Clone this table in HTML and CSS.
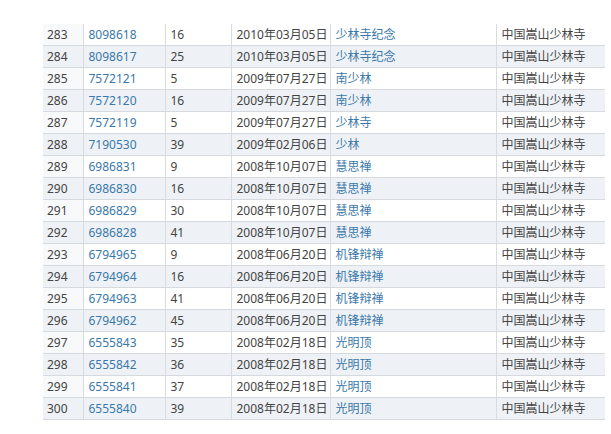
FILE: index.html
```html
<!DOCTYPE html>
<html lang="zh">
<head>
<meta charset="utf-8">
<link rel="stylesheet" href="styles.css">
</head>
<body>
<table class="grid">
  <colgroup>
    <col class="c-no"><col class="c-id"><col class="c-n"><col class="c-date"><col class="c-name"><col class="c-org">
  </colgroup>
  <tbody>
    <tr><td>283</td><td><a>8098618</a></td><td>16</td><td>2010年03月05日</td><td><a>少林寺纪念</a></td><td>中国嵩山少林寺</td></tr>
    <tr><td>284</td><td><a>8098617</a></td><td>25</td><td>2010年03月05日</td><td><a>少林寺纪念</a></td><td>中国嵩山少林寺</td></tr>
    <tr><td>285</td><td><a>7572121</a></td><td>5</td><td>2009年07月27日</td><td><a>南少林</a></td><td>中国嵩山少林寺</td></tr>
    <tr><td>286</td><td><a>7572120</a></td><td>16</td><td>2009年07月27日</td><td><a>南少林</a></td><td>中国嵩山少林寺</td></tr>
    <tr><td>287</td><td><a>7572119</a></td><td>5</td><td>2009年07月27日</td><td><a>少林寺</a></td><td>中国嵩山少林寺</td></tr>
    <tr><td>288</td><td><a>7190530</a></td><td>39</td><td>2009年02月06日</td><td><a>少林</a></td><td>中国嵩山少林寺</td></tr>
    <tr><td>289</td><td><a>6986831</a></td><td>9</td><td>2008年10月07日</td><td><a>慧思禅</a></td><td>中国嵩山少林寺</td></tr>
    <tr><td>290</td><td><a>6986830</a></td><td>16</td><td>2008年10月07日</td><td><a>慧思禅</a></td><td>中国嵩山少林寺</td></tr>
    <tr><td>291</td><td><a>6986829</a></td><td>30</td><td>2008年10月07日</td><td><a>慧思禅</a></td><td>中国嵩山少林寺</td></tr>
    <tr><td>292</td><td><a>6986828</a></td><td>41</td><td>2008年10月07日</td><td><a>慧思禅</a></td><td>中国嵩山少林寺</td></tr>
    <tr><td>293</td><td><a>6794965</a></td><td>9</td><td>2008年06月20日</td><td><a>机锋辩禅</a></td><td>中国嵩山少林寺</td></tr>
    <tr><td>294</td><td><a>6794964</a></td><td>16</td><td>2008年06月20日</td><td><a>机锋辩禅</a></td><td>中国嵩山少林寺</td></tr>
    <tr><td>295</td><td><a>6794963</a></td><td>41</td><td>2008年06月20日</td><td><a>机锋辩禅</a></td><td>中国嵩山少林寺</td></tr>
    <tr><td>296</td><td><a>6794962</a></td><td>45</td><td>2008年06月20日</td><td><a>机锋辩禅</a></td><td>中国嵩山少林寺</td></tr>
    <tr><td>297</td><td><a>6555843</a></td><td>35</td><td>2008年02月18日</td><td><a>光明顶</a></td><td>中国嵩山少林寺</td></tr>
    <tr><td>298</td><td><a>6555842</a></td><td>36</td><td>2008年02月18日</td><td><a>光明顶</a></td><td>中国嵩山少林寺</td></tr>
    <tr><td>299</td><td><a>6555841</a></td><td>37</td><td>2008年02月18日</td><td><a>光明顶</a></td><td>中国嵩山少林寺</td></tr>
    <tr><td>300</td><td><a>6555840</a></td><td>39</td><td>2008年02月18日</td><td><a>光明顶</a></td><td>中国嵩山少林寺</td></tr>
  </tbody>
</table>
</body>
</html>
```

FILE: styles.css
```css
html, body {
  margin: 0;
  padding: 0;
  background: #ffffff;
}

body {
  padding: 24px 0 0 43px;
  font-family: "Noto Sans", "Noto Sans CJK SC", sans-serif;
  font-size: 12px;
  color: #444444;
}

.grid {
  border-collapse: collapse;
  table-layout: fixed;
  width: 562px;
}

.c-no { width: 40px; }
.c-id { width: 82px; }
.c-n { width: 66px; }
.c-date { width: 99px; }
.c-name { width: 166px; }
.c-org { width: 109px; }

.grid td {
  height: 20px;
  padding: 1px 0 0 5px;
  border-bottom: 1px solid #d6d9dd;
  border-left: 1px solid #d9dcdf;
  white-space: nowrap;
  overflow: hidden;
  line-height: 20px;
}

.grid td:first-child {
  border-left: none;
  padding-left: 4px;
  background: #f8f9fa;
}

.grid tr:nth-child(even) td {
  background: #eef2f6;
}

.grid a {
  color: #3a78aa;
  text-decoration: none;
}
```
